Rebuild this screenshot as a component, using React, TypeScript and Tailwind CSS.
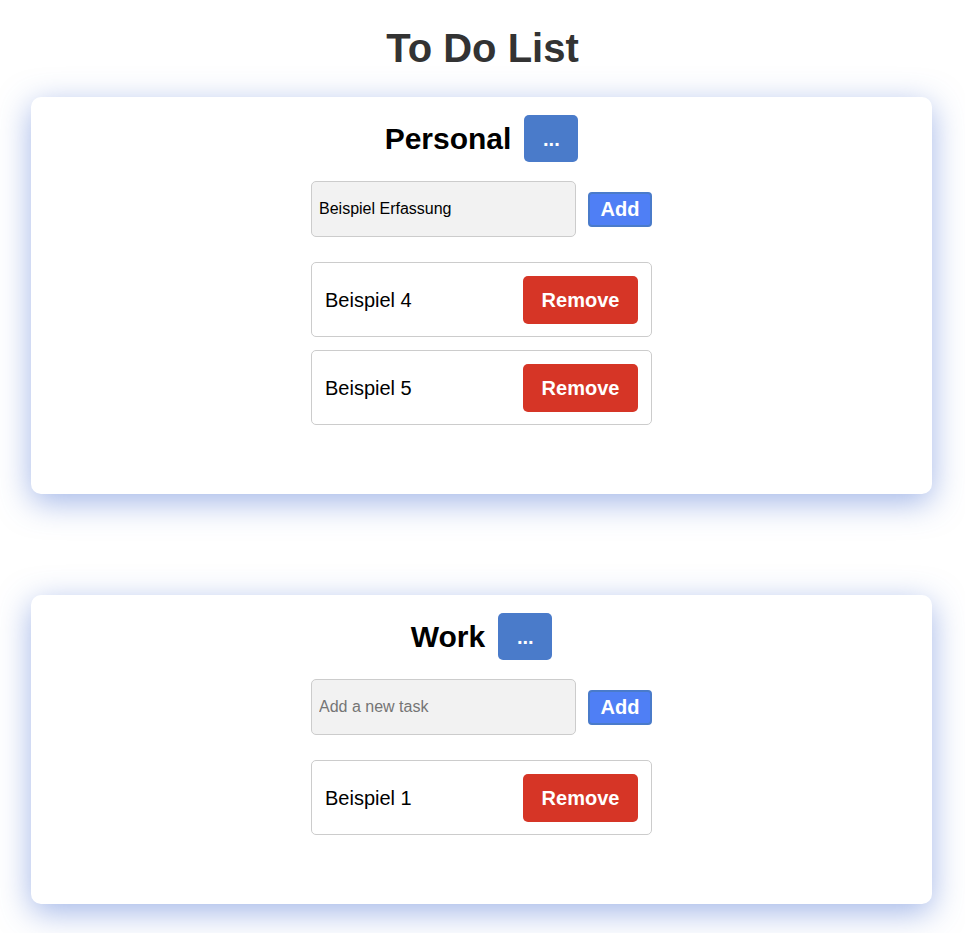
import { useState } from 'react'

type List = { name: string; draft: string; tasks: string[] }

const initial: List[] = [
  { name: 'Personal', draft: 'Beispiel Erfassung', tasks: ['Beispiel 4', 'Beispiel 5'] },
  { name: 'Work', draft: '', tasks: ['Beispiel 1'] },
]

function TaskList({ list, onChange }: { list: List; onChange: (l: List) => void }) {
  const add = () => {
    if (!list.draft.trim()) return
    onChange({ ...list, draft: '', tasks: [...list.tasks, list.draft.trim()] })
  }

  return (
    <div className="ml-[31px] mr-[33px] rounded-[10px] bg-white pt-[18px] pb-[69px] shadow-[0_8px_32px_rgba(70,110,210,0.5)]">
      <div className="flex items-center justify-center gap-[13px]">
        <h2 className="text-[30px] font-bold leading-none text-black">{list.name}</h2>
        <button className="h-[47px] w-[54px] rounded-[5px] bg-[#4a7bca] text-[20px] font-bold text-white">
          ...
        </button>
      </div>
      <div className="mx-auto mt-[19px] w-[341px]">
        <div className="flex items-center gap-[12px]">
          <input
            value={list.draft}
            onChange={(e) => onChange({ ...list, draft: e.target.value })}
            placeholder="Add a new task"
            className="h-[56px] w-[265px] rounded-[5px] border border-[#cccccc] bg-[#f2f2f2] px-[7px] text-[16px] text-black outline-none placeholder:text-[#757575]"
          />
          <button
            onClick={add}
            className="h-[35px] w-[64px] rounded-[4px] border-2 border-[#4a7bca] bg-[#4f7ff5] text-[20px] font-bold leading-none text-white"
          >
            Add
          </button>
        </div>
        <div className="mt-[25px] flex flex-col gap-[13px]">
          {list.tasks.map((task, i) => (
            <div
              key={i}
              className="flex h-[75px] items-center justify-between rounded-[5px] border border-[#cccccc] pl-[13px] pr-[13px]"
            >
              <span className="text-[20px] text-black">{task}</span>
              <button
                onClick={() => onChange({ ...list, tasks: list.tasks.filter((_, j) => j !== i) })}
                className="h-[48px] w-[115px] rounded-[5px] bg-[#d63526] text-[20px] font-bold text-white"
              >
                Remove
              </button>
            </div>
          ))}
        </div>
      </div>
    </div>
  )
}

export default function App() {
  const [lists, setLists] = useState(initial)

  return (
    <div className="min-h-screen bg-white pb-[40px] font-['Liberation_Sans',Arial,sans-serif]">
      <h1 className="pt-[25px] pb-[26px] text-center text-[40px] font-bold leading-[46px] text-[#333333]">
        To Do List
      </h1>
      <div className="flex flex-col gap-[101px]">
        {lists.map((list, i) => (
          <TaskList
            key={list.name}
            list={list}
            onChange={(l) => setLists(lists.map((x, j) => (j === i ? l : x)))}
          />
        ))}
      </div>
    </div>
  )
}
